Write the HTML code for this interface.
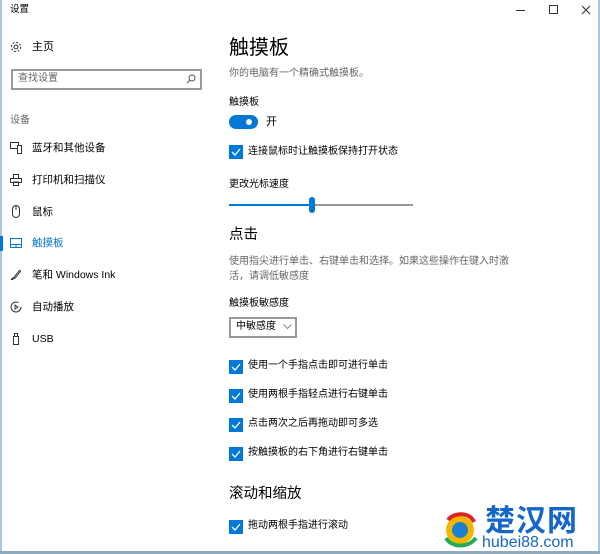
<!DOCTYPE html>
<html><head><meta charset="utf-8"><style>
*{margin:0;padding:0;box-sizing:border-box}
body{width:600px;height:554px;background:#fff;position:relative;overflow:hidden;font-family:"Liberation Sans","Microsoft YaHei","Noto Sans CJK SC",sans-serif;color:#000;font-size:10px}
.a{position:absolute;white-space:nowrap;line-height:1}
.g{color:#666}
.cb{position:absolute;width:14px;height:14px;background:#0078d7}
.cb svg{position:absolute;left:1px;top:1px}
.ic{position:absolute;left:10px}
.n{font-size:10.5px}
</style></head><body>
<div style="position:absolute;left:0;top:0;width:2px;height:554px;background:#a9c6dd"></div>
<div style="position:absolute;right:0;top:0;width:2px;height:554px;background:#a9c6dd"></div>
<div style="position:absolute;left:0;bottom:0;width:600px;height:3px;background:#8fa9bd"></div>

<div class="a" style="left:10px;top:5px;font-size:9.5px">设置</div>
<div class="a" style="left:516px;top:10px;width:9px;height:1px;background:#333"></div>
<div class="a" style="left:549px;top:5px;width:9px;height:9px;border:1px solid #333"></div>
<svg class="a" style="left:581px;top:5px" width="10" height="10"><path d="M1 1L9 9M9 1L1 9" stroke="#333" stroke-width="1.1"/></svg>

<svg class="a" style="left:10px;top:41px" width="12" height="12" viewBox="0 0 12 12"><circle cx="6" cy="6" r="2" fill="none" stroke="#333"/><circle cx="6" cy="6" r="4.6" fill="none" stroke="#333" stroke-dasharray="2 1.6"/></svg>
<div class="a n" style="left:32px;top:42px;font-size:11px">主页</div>
<div class="a" style="left:11px;top:69px;width:191px;height:21px;border:2px solid #999"></div>
<div class="a g" style="left:18px;top:74px;font-size:10px">查找设置</div>
<svg class="a" style="left:186px;top:74px" width="10" height="10"><circle cx="6" cy="4" r="3" fill="none" stroke="#555"/><path d="M4 6L1 9" stroke="#555"/></svg>
<div class="a g" style="left:10px;top:116px;font-size:10px">设备</div>

<svg class="ic a" style="top:142px" width="12" height="12"><rect x="0.5" y="0.5" width="8" height="6" fill="none" stroke="#333"/><rect x="7.5" y="3.5" width="4" height="8" fill="#fff" stroke="#333"/></svg>
<div class="a n" style="left:32px;top:143px">蓝牙和其他设备</div>
<svg class="ic a" style="top:174px" width="12" height="12"><rect x="3.5" y="0.5" width="5" height="4" fill="none" stroke="#333"/><rect x="0.5" y="4.5" width="11" height="4" fill="none" stroke="#333"/><rect x="3.5" y="8" width="5" height="3.5" fill="none" stroke="#333"/></svg>
<div class="a n" style="left:32px;top:175px">打印机和扫描仪</div>
<svg class="ic a" style="top:205px" width="12" height="13"><rect x="2.5" y="0.5" width="7" height="12" rx="3.5" fill="none" stroke="#333"/><path d="M6 1V5" stroke="#333"/></svg>
<div class="a n" style="left:32px;top:207px">鼠标</div>
<div class="a" style="left:0;top:236px;width:3px;height:15px;background:#0078d7"></div>
<svg class="ic a" style="top:238px" width="12" height="11"><rect x="0.5" y="0.5" width="11" height="9" fill="none" stroke="#0078d7"/><path d="M0.5 6.5H11.5M6 6.5V9.5" stroke="#0078d7"/></svg>
<div class="a n" style="left:32px;top:238px;color:#0078d7">触摸板</div>
<svg class="ic a" style="top:269px" width="12" height="12"><path d="M1 11C2 8 4 10 5 7L9 2C10 1 11 2 10 3L6 8C5 10 3 9 2 11" fill="none" stroke="#333"/></svg>
<div class="a n" style="left:32px;top:270px">笔和 Windows Ink</div>
<svg class="ic a" style="top:301px" width="12" height="12"><circle cx="6" cy="6" r="5" fill="none" stroke="#333" stroke-dasharray="26 5"/><path d="M5 4L8 6L5 8Z" fill="none" stroke="#333"/></svg>
<div class="a n" style="left:32px;top:302px">自动播放</div>
<svg class="ic a" style="top:333px" width="12" height="12"><rect x="3.5" y="3.5" width="5" height="8" fill="none" stroke="#333"/><path d="M4.5 3.5V0.5H7.5V3.5" fill="none" stroke="#333"/></svg>
<div class="a n" style="left:32px;top:334px">USB</div>

<div class="a" style="left:229px;top:38px;font-size:20px">触摸板</div>
<div class="a g" style="left:229px;top:69px">你的电脑有一个精确式触摸板。</div>
<div class="a" style="left:229px;top:98px">触摸板</div>
<div class="a" style="left:229px;top:115px;width:29px;height:14px;border-radius:7px;background:#0078d7"></div>
<div class="a" style="left:246px;top:119px;width:6px;height:6px;border-radius:3px;background:#fff"></div>
<div class="a" style="left:266px;top:117px;font-size:11px">开</div>
<div class="cb" style="left:229px;top:145px"><svg width="12" height="12"><path d="M2 6L5 9L10 3" fill="none" stroke="#fff" stroke-width="1.3"/></svg></div>
<div class="a" style="left:248px;top:147px">连接鼠标时让触摸板保持打开状态</div>
<div class="a" style="left:229px;top:180px">更改光标速度</div>
<div class="a" style="left:229px;top:204px;width:82px;height:2px;background:#0078d7"></div>
<div class="a" style="left:311px;top:204px;width:102px;height:2px;background:#999"></div>
<div class="a" style="left:309px;top:197px;width:6px;height:16px;border-radius:3px;background:#0078d7"></div>
<div class="a" style="left:229px;top:228px;font-size:14.5px">点击</div>
<div class="a g" style="left:229px;top:257px">使用指尖进行单击、右键单击和选择。如果这些操作在键入时激</div>
<div class="a g" style="left:229px;top:272px">活，请调低敏感度</div>
<div class="a" style="left:229px;top:299px">触摸板敏感度</div>
<div class="a" style="left:229px;top:317px;width:68px;height:21px;border:2px solid #999"></div>
<div class="a" style="left:236px;top:322px">中敏感度</div>
<svg class="a" style="left:283px;top:324px" width="9" height="6"><path d="M0.5 0.5L4.5 4.5L8.5 0.5" fill="none" stroke="#888"/></svg>

<div class="cb" style="left:229px;top:360px"><svg width="12" height="12"><path d="M2 6L5 9L10 3" fill="none" stroke="#fff" stroke-width="1.3"/></svg></div>
<div class="a" style="left:248px;top:361px">使用一个手指点击即可进行单击</div>
<div class="cb" style="left:229px;top:389px"><svg width="12" height="12"><path d="M2 6L5 9L10 3" fill="none" stroke="#fff" stroke-width="1.3"/></svg></div>
<div class="a" style="left:248px;top:390px">使用两根手指轻点进行右键单击</div>
<div class="cb" style="left:229px;top:418px"><svg width="12" height="12"><path d="M2 6L5 9L10 3" fill="none" stroke="#fff" stroke-width="1.3"/></svg></div>
<div class="a" style="left:248px;top:419px">点击两次之后再拖动即可多选</div>
<div class="cb" style="left:229px;top:447px"><svg width="12" height="12"><path d="M2 6L5 9L10 3" fill="none" stroke="#fff" stroke-width="1.3"/></svg></div>
<div class="a" style="left:248px;top:448px">按触摸板的右下角进行右键单击</div>
<div class="a" style="left:229px;top:487px;font-size:14.5px">滚动和缩放</div>
<div class="cb" style="left:229px;top:520px"><svg width="12" height="12"><path d="M2 6L5 9L10 3" fill="none" stroke="#fff" stroke-width="1.3"/></svg></div>
<div class="a" style="left:248px;top:521px">拖动两根手指进行滚动</div>

<svg class="a" style="left:440px;top:508px" width="40" height="42"><circle cx="20" cy="22" r="14" fill="#f2b600"/><path d="M8 12C14 4 30 4 34 14" stroke="#d22" stroke-width="4" fill="none"/><path d="M6 30C12 40 28 40 36 30" stroke="#2a5" stroke-width="4" fill="none"/><circle cx="20" cy="22" r="8" fill="#1a7fd0"/></svg>
<div class="a" style="left:485px;top:507px;font-size:30px;font-weight:bold;color:#1466c8;letter-spacing:1px">楚汉网</div>
<div class="a" style="left:482px;top:535px;font-size:16px;color:#1466c8">hubei88.com</div>
</body></html>
